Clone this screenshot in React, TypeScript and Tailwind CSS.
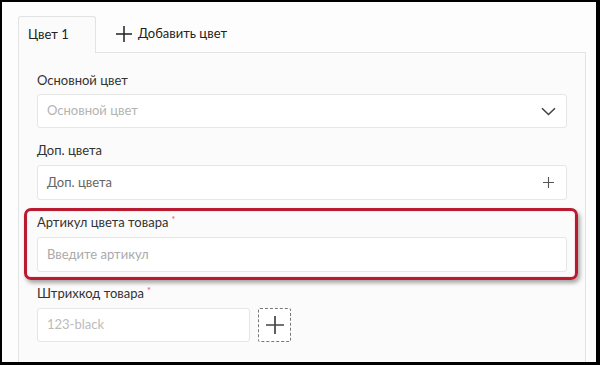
const font = { fontFamily: "Lato, 'Noto Sans', 'Liberation Sans', sans-serif" };

function Cross({ size, stroke, color }: { size: number; stroke: number; color: string }) {
  const h = size / 2;
  return (
    <svg width={size} height={size} viewBox={`0 0 ${size} ${size}`} className="shrink-0">
      <path d={`M0 ${h}H${size}M${h} 0V${size}`} stroke={color} strokeWidth={stroke} fill="none" />
    </svg>
  );
}

function Label({ text, required }: { text: string; required?: boolean }) {
  return (
    <div className="h-4 text-[13px] leading-4 text-[#333]">
      {text}
      {required && <span className="ml-[3px] align-top text-[9px] leading-3 text-[#e0566b]">*</span>}
    </div>
  );
}

export default function App() {
  return (
    <div
      style={font}
      className="flex h-[365px] w-[600px] flex-col overflow-hidden border-b-[3px] border-l-2 border-r-4 border-t-2 border-black bg-[#fdfdfd] pl-4 pt-[14px]"
    >
      {/* tabs */}
      <div className="flex h-9 items-end">
        <div className="relative z-10 -mb-px flex h-[37px] w-[78px] items-center rounded-t-[3px] border border-b-0 border-[#e3e3e3] bg-[#fbfbfb] pl-[9px] text-[13px] text-[#222]">
          Цвет 1
        </div>
        <div className="ml-5 flex h-9 items-center gap-[6px] text-[13px] text-[#222]">
          <Cross size={16} stroke={1.5} color="#222" />
          Добавить цвет
        </div>
      </div>

      {/* panel */}
      <div className="flex w-[568px] flex-1 flex-col border border-b-0 border-[#e3e3e3] bg-[#fbfbfb] pl-[18px] pr-[18px] pt-[19px]">
        <Label text="Основной цвет" />
        <div className="mt-[6px] flex h-[34px] items-center justify-between rounded-[3px] border border-[#e6e6e6] bg-white pl-[9px] pr-[10px] text-[13px] text-[#b3b3b3]">
          Основной цвет
          <svg width="15" height="9" viewBox="0 0 15 9" className="shrink-0">
            <path d="M1 1.2L7.5 7.5L14 1.2" stroke="#444" strokeWidth="1.6" fill="none" />
          </svg>
        </div>

        <div className="mt-[14px]">
          <Label text="Доп. цвета" />
        </div>
        <div className="mt-[7px] flex h-[35px] items-center justify-between rounded-[3px] border border-[#e6e6e6] bg-white pl-[9px] pr-[12px] text-[13px] text-[#666]">
          Доп. цвета
          <Cross size={11} stroke={1.1} color="#555" />
        </div>

        <div className="relative mt-[14px]">
          <div className="pointer-events-none absolute -bottom-2 -left-[13px] -right-[11px] -top-[6px] rounded-[7px] border-[3px] border-[#b81b30] shadow-[2px_3px_4px_rgba(0,0,0,0.35),inset_0_0_0_1px_rgba(255,225,230,0.8)]" />
          <Label text="Артикул цвета товара" required />
          <div className="mt-[7px] flex h-[35px] items-center rounded-[3px] border border-[#e6e6e6] bg-white pl-[9px] text-[13px] text-[#aaa]">
            Введите артикул
          </div>
        </div>

        <div className="mt-[13px]">
          <Label text="Штрихкод товара" required />
        </div>
        <div className="mt-[7px] flex items-center gap-2">
          <div className="flex h-[34px] w-[213px] items-center rounded-[3px] border border-[#e6e6e6] bg-white pl-[9px] text-[13px] text-[#bbb]">
            123-black
          </div>
          <div className="flex h-[34px] w-[33px] items-center justify-center rounded-[2px] border border-dashed border-[#777] bg-white">
            <Cross size={18} stroke={1.7} color="#444" />
          </div>
        </div>
      </div>
    </div>
  );
}
